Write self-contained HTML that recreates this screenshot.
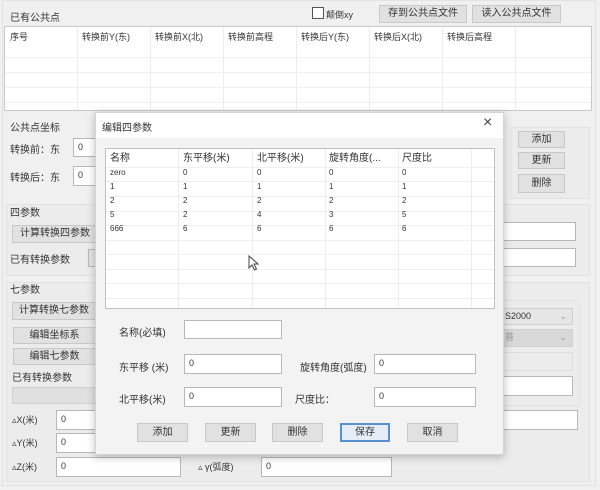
<!DOCTYPE html>
<html><head><meta charset="utf-8"><style>
*{box-sizing:border-box;margin:0;padding:0}
body{width:600px;height:490px;background:#f0f0f0;font-family:"Liberation Sans","Noto Sans CJK SC",sans-serif;font-size:10px;color:#333;position:relative;overflow:hidden}
.a{position:absolute;white-space:nowrap}
.in{position:absolute;background:#fff;border:1px solid #b8b8b8;padding-left:4px;font-size:9px;line-height:17px}
.bt{position:absolute;background:#e1e1e1;border:1px solid #c8c8c8;text-align:center;font-size:10px}
.pn{position:absolute;border:1px solid #e2e2e2;background:#ececec}
.vl{position:absolute;width:1px;background:#ececec}
.hl{position:absolute;height:1px;background:#f0f0f0}
</style></head><body>
<div class="pn" style="left:2px;top:0;width:594px;height:486px;background:#f0f0f0"></div>
<div class="a" style="left:10px;top:9px">已有公共点</div>
<div class="a" style="left:312px;top:7px;width:12px;height:12px;border:1px solid #555;background:#fff"></div>
<div class="a" style="left:326px;top:8px;font-size:9px">颠倒xy</div>
<div class="bt" style="left:379px;top:5px;width:88px;height:18px;line-height:16px">存到公共点文件</div>
<div class="bt" style="left:472px;top:5px;width:89px;height:18px;line-height:16px">读入公共点文件</div>
<div class="a" style="left:4px;top:26px;width:588px;height:85px;background:#fff;border:1px solid #c8c8c8"></div>
<div class="vl" style="left:77px;top:27px;height:83px"></div><div class="vl" style="left:150px;top:27px;height:83px"></div><div class="vl" style="left:223px;top:27px;height:83px"></div><div class="vl" style="left:296px;top:27px;height:83px"></div><div class="vl" style="left:369px;top:27px;height:83px"></div><div class="vl" style="left:442px;top:27px;height:83px"></div><div class="vl" style="left:515px;top:27px;height:83px"></div>
<div class="hl" style="left:5px;top:57px;width:586px"></div><div class="hl" style="left:5px;top:72px;width:586px"></div><div class="hl" style="left:5px;top:87px;width:586px"></div><div class="hl" style="left:5px;top:102px;width:586px"></div>
<div class="a" style="left:10px;top:30px;font-size:9px">序号</div>
<div class="a" style="left:82px;top:30px;font-size:9px">转换前Y(东)</div>
<div class="a" style="left:155px;top:30px;font-size:9px">转换前X(北)</div>
<div class="a" style="left:228px;top:30px;font-size:9px">转换前高程</div>
<div class="a" style="left:301px;top:30px;font-size:9px">转换后Y(东)</div>
<div class="a" style="left:374px;top:30px;font-size:9px">转换后X(北)</div>
<div class="a" style="left:447px;top:30px;font-size:9px">转换后高程</div>

<div class="a" style="left:10px;top:119px">公共点坐标</div>
<div class="a" style="left:10px;top:141px">转换前：东</div>
<div class="in" style="left:73px;top:138px;width:40px;height:19px">0</div>
<div class="a" style="left:10px;top:169px">转换后：东</div>
<div class="in" style="left:73px;top:166px;width:40px;height:20px">0</div>
<div class="pn" style="left:510px;top:127px;width:80px;height:72px"></div>
<div class="bt" style="left:518px;top:131px;width:47px;height:17px;line-height:15px">添加</div>
<div class="bt" style="left:518px;top:152px;width:47px;height:17px;line-height:15px">更新</div>
<div class="bt" style="left:518px;top:174px;width:47px;height:19px;line-height:17px">删除</div>
<div class="pn" style="left:6px;top:204px;width:584px;height:72px"></div>
<div class="a" style="left:10px;top:204px">四参数</div>
<div class="bt" style="left:12px;top:225px;width:86px;height:18px;line-height:16px">计算转换四参数</div>
<div class="a" style="left:10px;top:251px">已有转换参数</div>
<div class="in" style="left:88px;top:249px;width:12px;height:18px;background:#e4e4e4"></div>
<div class="in" style="left:502px;top:222px;width:74px;height:19px"></div>
<div class="in" style="left:502px;top:248px;width:74px;height:19px"></div>
<div class="pn" style="left:6px;top:282px;width:584px;height:200px"></div>
<div class="a" style="left:10px;top:281px">七参数</div>
<div class="bt" style="left:12px;top:302px;width:84px;height:18px;line-height:16px">计算转换七参数</div>
<div class="bt" style="left:13px;top:327px;width:83px;height:17px;line-height:15px">编辑坐标系</div>
<div class="bt" style="left:13px;top:348px;width:83px;height:17px;line-height:15px">编辑七参数</div>
<div class="a" style="left:12px;top:369px">已有转换参数</div>
<div class="a" style="left:12px;top:387px;width:84px;height:17px;background:#e0e0e0;border:1px solid #d0d0d0"></div>
<div class="a" style="left:12px;top:413px;font-size:9px">▵X(米)</div>
<div class="in" style="left:56px;top:410px;width:44px;height:20px">0</div>
<div class="a" style="left:12px;top:436px;font-size:9px">▵Y(米)</div>
<div class="in" style="left:56px;top:433px;width:44px;height:20px">0</div>
<div class="a" style="left:12px;top:460px;font-size:9px">▵Z(米)</div>
<div class="in" style="left:56px;top:457px;width:125px;height:20px">0</div>
<div class="a" style="left:198px;top:460px;font-size:9px">▵ γ(弧度)</div>
<div class="in" style="left:261px;top:457px;width:131px;height:20px">0</div>
<div class="pn" style="left:496px;top:300px;width:84px;height:106px"></div>
<div class="in" style="left:500px;top:308px;width:73px;height:17px;background:#e6e6e6;border-color:#d0d0d0;line-height:15px">S2000<span style="float:right;margin-right:5px;color:#999">⌄</span></div>
<div class="in" style="left:500px;top:329px;width:73px;height:18px;background:#d8d8d8;border-color:#d0d0d0;color:#999;line-height:15px">普<span style="float:right;margin-right:5px">⌄</span></div>
<div class="in" style="left:500px;top:352px;width:73px;height:19px;background:#ececec;border-color:#ddd"></div>
<div class="in" style="left:500px;top:376px;width:73px;height:20px"></div>
<div class="in" style="left:502px;top:410px;width:76px;height:20px"></div>

<!-- dialog -->
<div class="a" style="left:95px;top:112px;width:409px;height:343px;background:#f3f3f3;border:1px solid #d4d4d4;box-shadow:0 2px 8px rgba(0,0,0,.25)"></div>
<div class="a" style="left:96px;top:113px;width:407px;height:25px;background:#fff"></div>
<div class="a" style="left:102px;top:119px;font-size:10px">编辑四参数</div>
<div class="a" style="left:483px;top:114px;font-size:16px;color:#444">×</div>
<div class="a" style="left:105px;top:148px;width:390px;height:161px;background:#fff;border:1px solid #c0c0c0"></div>
<div class="vl" style="left:178px;top:149px;height:159px"></div><div class="vl" style="left:252px;top:149px;height:159px"></div><div class="vl" style="left:325px;top:149px;height:159px"></div><div class="vl" style="left:398px;top:149px;height:159px"></div><div class="vl" style="left:471px;top:149px;height:159px"></div>
<div class="hl" style="left:106px;top:167px;width:388px"></div><div class="hl" style="left:106px;top:181px;width:388px"></div><div class="hl" style="left:106px;top:196px;width:388px"></div><div class="hl" style="left:106px;top:211px;width:388px"></div><div class="hl" style="left:106px;top:225px;width:388px"></div><div class="hl" style="left:106px;top:240px;width:388px"></div><div class="hl" style="left:106px;top:254px;width:388px"></div><div class="hl" style="left:106px;top:269px;width:388px"></div><div class="hl" style="left:106px;top:283px;width:388px"></div><div class="hl" style="left:106px;top:298px;width:388px"></div>
<div class="a" style="left:110px;top:152px;line-height:14px">名称<br><span style="font-size:8px">zero<br>1<br>2<br>5<br>666</span></div>
<div class="a" style="left:183px;top:152px;line-height:14px">东平移(米)<br><span style="font-size:8px">0<br>1<br>2<br>2<br>6</span></div>
<div class="a" style="left:257px;top:152px;line-height:14px">北平移(米)<br><span style="font-size:8px">0<br>1<br>2<br>4<br>6</span></div>
<div class="a" style="left:329px;top:152px;line-height:14px">旋转角度(...<br><span style="font-size:8px">0<br>1<br>2<br>3<br>6</span></div>
<div class="a" style="left:402px;top:152px;line-height:14px">尺度比<br><span style="font-size:8px">0<br>1<br>2<br>5<br>6</span></div>
<svg class="a" style="left:248px;top:255px" width="12" height="16" viewBox="0 0 12 16"><path d="M1 1 L1 13 L4 10 L6.5 15 L8.5 14 L6 9 L10 9 Z" fill="#fff" stroke="#444" stroke-width="1"/></svg>
<div class="a" style="left:119px;top:324px">名称(必填)</div>
<div class="in" style="left:184px;top:320px;width:98px;height:19px"></div>
<div class="a" style="left:119px;top:359px">东平移 (米)</div>
<div class="in" style="left:184px;top:354px;width:98px;height:20px">0</div>
<div class="a" style="left:300px;top:359px">旋转角度(弧度)</div>
<div class="in" style="left:374px;top:354px;width:102px;height:20px">0</div>
<div class="a" style="left:119px;top:391px">北平移(米)</div>
<div class="in" style="left:184px;top:387px;width:98px;height:20px">0</div>
<div class="a" style="left:295px;top:391px">尺度比：</div>
<div class="in" style="left:374px;top:387px;width:102px;height:20px">0</div>
<div class="bt" style="left:137px;top:423px;width:51px;height:19px;line-height:17px">添加</div>
<div class="bt" style="left:205px;top:423px;width:51px;height:19px;line-height:17px">更新</div>
<div class="bt" style="left:272px;top:423px;width:51px;height:19px;line-height:17px">删除</div>
<div class="bt" style="left:340px;top:423px;width:50px;height:19px;line-height:15px;border:2px solid #5a8fd0;background:#e5eef8">保存</div>
<div class="bt" style="left:407px;top:423px;width:51px;height:19px;line-height:17px">取消</div>
</body></html>
